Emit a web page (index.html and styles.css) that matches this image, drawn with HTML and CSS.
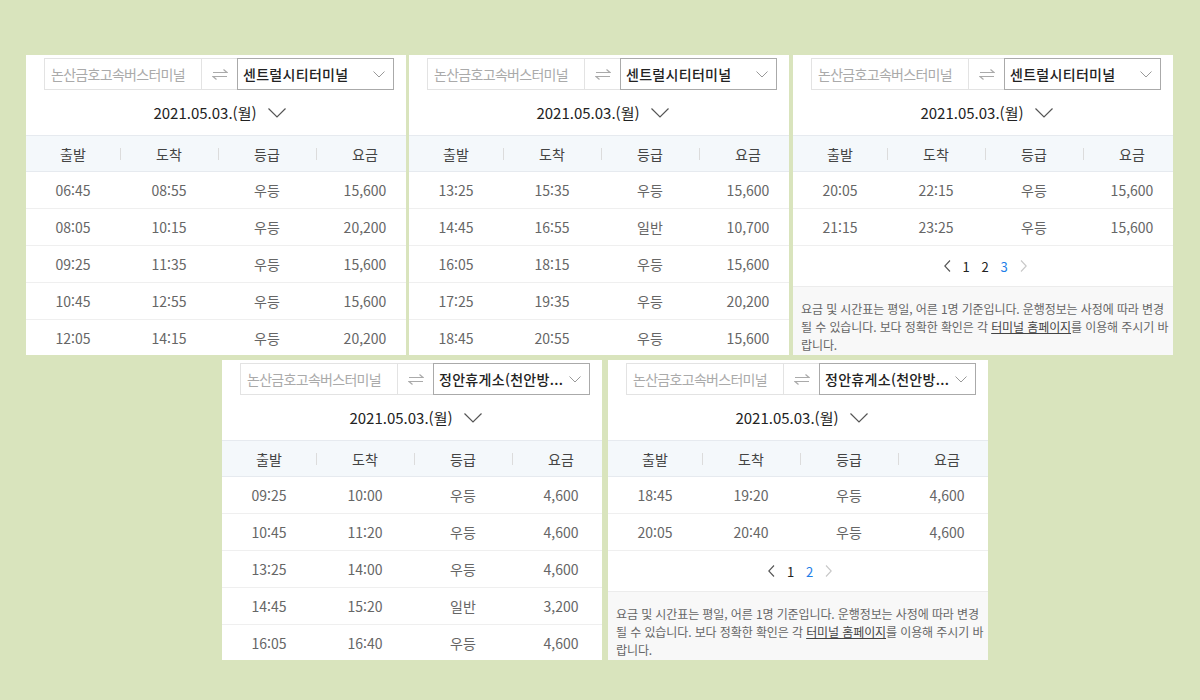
FILE: index.html
```html
<!DOCTYPE html>
<html lang="ko">
<head>
<meta charset="utf-8">
<title>시간표</title>
<link rel="stylesheet" href="styles.css">
</head>
<body>
<div class="board">
  <div class="row row-top">
    <section class="panel">
      <div class="route">
        <div class="from">논산금호고속버스터미널</div>
        <div class="swap"><svg width="16" height="12" viewBox="0 0 16 12"><path d="M1 4.5H15L11.5 1.5M15 8.5H1L4.5 11.5" fill="none" stroke="#aaa" stroke-width="1.2"/></svg></div>
        <div class="to"><span class="to-name">센트럴시티터미널</span><svg class="chev" width="12" height="7" viewBox="0 0 12 7"><polyline points="0.5,0.5 6,6 11.5,0.5" fill="none" stroke="#999" stroke-width="1"/></svg></div>
      </div>
      <div class="date">2021.05.03.(월)<svg class="date-chev" width="18" height="10" viewBox="0 0 18 10"><polyline points="0.5,0.5 9,9 17.5,0.5" fill="none" stroke="#555" stroke-width="1.2"/></svg></div>
      <div class="thead"><span>출발</span><span>도착</span><span>등급</span><span>요금</span></div>
      <div class="tr"><span>06:45</span><span>08:55</span><span>우등</span><span>15,600</span></div>
      <div class="tr"><span>08:05</span><span>10:15</span><span>우등</span><span>20,200</span></div>
      <div class="tr"><span>09:25</span><span>11:35</span><span>우등</span><span>15,600</span></div>
      <div class="tr"><span>10:45</span><span>12:55</span><span>우등</span><span>15,600</span></div>
      <div class="tr"><span>12:05</span><span>14:15</span><span>우등</span><span>20,200</span></div>
    </section>
    <section class="panel">
      <div class="route">
        <div class="from">논산금호고속버스터미널</div>
        <div class="swap"><svg width="16" height="12" viewBox="0 0 16 12"><path d="M1 4.5H15L11.5 1.5M15 8.5H1L4.5 11.5" fill="none" stroke="#aaa" stroke-width="1.2"/></svg></div>
        <div class="to"><span class="to-name">센트럴시티터미널</span><svg class="chev" width="12" height="7" viewBox="0 0 12 7"><polyline points="0.5,0.5 6,6 11.5,0.5" fill="none" stroke="#999" stroke-width="1"/></svg></div>
      </div>
      <div class="date">2021.05.03.(월)<svg class="date-chev" width="18" height="10" viewBox="0 0 18 10"><polyline points="0.5,0.5 9,9 17.5,0.5" fill="none" stroke="#555" stroke-width="1.2"/></svg></div>
      <div class="thead"><span>출발</span><span>도착</span><span>등급</span><span>요금</span></div>
      <div class="tr"><span>13:25</span><span>15:35</span><span>우등</span><span>15,600</span></div>
      <div class="tr"><span>14:45</span><span>16:55</span><span>일반</span><span>10,700</span></div>
      <div class="tr"><span>16:05</span><span>18:15</span><span>우등</span><span>15,600</span></div>
      <div class="tr"><span>17:25</span><span>19:35</span><span>우등</span><span>20,200</span></div>
      <div class="tr"><span>18:45</span><span>20:55</span><span>우등</span><span>15,600</span></div>
    </section>
    <section class="panel panel-last">
      <div class="route">
        <div class="from">논산금호고속버스터미널</div>
        <div class="swap"><svg width="16" height="12" viewBox="0 0 16 12"><path d="M1 4.5H15L11.5 1.5M15 8.5H1L4.5 11.5" fill="none" stroke="#aaa" stroke-width="1.2"/></svg></div>
        <div class="to"><span class="to-name">센트럴시티터미널</span><svg class="chev" width="12" height="7" viewBox="0 0 12 7"><polyline points="0.5,0.5 6,6 11.5,0.5" fill="none" stroke="#999" stroke-width="1"/></svg></div>
      </div>
      <div class="date">2021.05.03.(월)<svg class="date-chev" width="18" height="10" viewBox="0 0 18 10"><polyline points="0.5,0.5 9,9 17.5,0.5" fill="none" stroke="#555" stroke-width="1.2"/></svg></div>
      <div class="thead"><span>출발</span><span>도착</span><span>등급</span><span>요금</span></div>
      <div class="tr"><span>20:05</span><span>22:15</span><span>우등</span><span>15,600</span></div>
      <div class="tr"><span>21:15</span><span>23:25</span><span>우등</span><span>15,600</span></div>
      <div class="pager">
        <span class="pg"><svg width="7" height="12" viewBox="0 0 7 12"><polyline points="6,0.5 0.8,6 6,11.5" fill="none" stroke="#555" stroke-width="1.1"/></svg></span>
        <span class="pg">1</span><span class="pg">2</span><span class="pg cur">3</span>
        <span class="pg"><svg width="7" height="12" viewBox="0 0 7 12"><polyline points="1,0.5 6.2,6 1,11.5" fill="none" stroke="#c8c8c8" stroke-width="1.1"/></svg></span>
      </div>
      <p class="note">요금 및 시간표는 평일, 어른 1명 기준입니다. 운행정보는 사정에 따라 변경<br>될 수 있습니다. 보다 정확한 확인은 각 <a class="link">터미널 홈페이지</a>를 이용해 주시기 바<br>랍니다.</p>
    </section>
  </div>
  <div class="row row-bottom">
    <section class="panel">
      <div class="route">
        <div class="from">논산금호고속버스터미널</div>
        <div class="swap"><svg width="16" height="12" viewBox="0 0 16 12"><path d="M1 4.5H15L11.5 1.5M15 8.5H1L4.5 11.5" fill="none" stroke="#aaa" stroke-width="1.2"/></svg></div>
        <div class="to"><span class="to-name">정안휴게소(천안방...</span><svg class="chev" width="12" height="7" viewBox="0 0 12 7"><polyline points="0.5,0.5 6,6 11.5,0.5" fill="none" stroke="#999" stroke-width="1"/></svg></div>
      </div>
      <div class="date">2021.05.03.(월)<svg class="date-chev" width="18" height="10" viewBox="0 0 18 10"><polyline points="0.5,0.5 9,9 17.5,0.5" fill="none" stroke="#555" stroke-width="1.2"/></svg></div>
      <div class="thead"><span>출발</span><span>도착</span><span>등급</span><span>요금</span></div>
      <div class="tr"><span>09:25</span><span>10:00</span><span>우등</span><span>4,600</span></div>
      <div class="tr"><span>10:45</span><span>11:20</span><span>우등</span><span>4,600</span></div>
      <div class="tr"><span>13:25</span><span>14:00</span><span>우등</span><span>4,600</span></div>
      <div class="tr"><span>14:45</span><span>15:20</span><span>일반</span><span>3,200</span></div>
      <div class="tr"><span>16:05</span><span>16:40</span><span>우등</span><span>4,600</span></div>
    </section>
    <section class="panel">
      <div class="route">
        <div class="from">논산금호고속버스터미널</div>
        <div class="swap"><svg width="16" height="12" viewBox="0 0 16 12"><path d="M1 4.5H15L11.5 1.5M15 8.5H1L4.5 11.5" fill="none" stroke="#aaa" stroke-width="1.2"/></svg></div>
        <div class="to"><span class="to-name">정안휴게소(천안방...</span><svg class="chev" width="12" height="7" viewBox="0 0 12 7"><polyline points="0.5,0.5 6,6 11.5,0.5" fill="none" stroke="#999" stroke-width="1"/></svg></div>
      </div>
      <div class="date">2021.05.03.(월)<svg class="date-chev" width="18" height="10" viewBox="0 0 18 10"><polyline points="0.5,0.5 9,9 17.5,0.5" fill="none" stroke="#555" stroke-width="1.2"/></svg></div>
      <div class="thead"><span>출발</span><span>도착</span><span>등급</span><span>요금</span></div>
      <div class="tr"><span>18:45</span><span>19:20</span><span>우등</span><span>4,600</span></div>
      <div class="tr"><span>20:05</span><span>20:40</span><span>우등</span><span>4,600</span></div>
      <div class="pager">
        <span class="pg"><svg width="7" height="12" viewBox="0 0 7 12"><polyline points="6,0.5 0.8,6 6,11.5" fill="none" stroke="#555" stroke-width="1.1"/></svg></span>
        <span class="pg">1</span><span class="pg cur">2</span>
        <span class="pg"><svg width="7" height="12" viewBox="0 0 7 12"><polyline points="1,0.5 6.2,6 1,11.5" fill="none" stroke="#c8c8c8" stroke-width="1.1"/></svg></span>
      </div>
      <p class="note">요금 및 시간표는 평일, 어른 1명 기준입니다. 운행정보는 사정에 따라 변경<br>될 수 있습니다. 보다 정확한 확인은 각 <a class="link">터미널 홈페이지</a>를 이용해 주시기 바<br>랍니다.</p>
    </section>
  </div>
</div>
</body>
</html>
```

FILE: styles.css
```css
* { box-sizing: border-box; }

html, body {
  margin: 0;
  padding: 0;
}

body {
  width: 1200px;
  height: 700px;
  background: #d9e4bd;
  font-family: "Noto Sans CJK KR", "Noto Sans", sans-serif;
  overflow: hidden;
}

.board {
  padding-top: 55px;
  display: flex;
  flex-direction: column;
  gap: 5px;
}

.row {
  display: flex;
}

.row-top {
  padding-left: 26px;
  gap: 3px;
}

.row-top .panel-last {
  margin-left: 1px;
}

.row-bottom {
  padding-left: 222px;
  gap: 6px;
}

.panel {
  width: 380px;
  height: 300px;
  background: #fff;
  overflow: hidden;
  padding-top: 3px;
}

/* route selector */
.route {
  display: flex;
  width: 350px;
  height: 32px;
  margin-left: 18px;
  border: 1px solid #e3e3e3;
}

.from {
  width: 157px;
  border-right: 1px solid #e3e3e3;
  padding-left: 6px;
  display: flex;
  align-items: center;
  font-size: 14px;
  letter-spacing: -0.7px;
  color: #aaa;
  white-space: nowrap;
}

.swap {
  width: 35px;
  display: flex;
  align-items: center;
  justify-content: center;
}

.to {
  flex: 1;
  margin: -1px -1px -1px 0;
  border: 1px solid #aaa;
  display: flex;
  align-items: center;
  justify-content: space-between;
  padding: 0 8px 0 5px;
  color: #222;
}

.to-name {
  font-size: 14px;
  font-weight: 500;
  letter-spacing: 0.3px;
  white-space: nowrap;
}

.chev { flex: none; }

/* date */
.date {
  height: 45px;
  display: flex;
  align-items: center;
  justify-content: center;
  font-size: 15px;
  color: #222;
  gap: 11px;
  padding-left: 7px;
}

/* table */
.thead, .tr {
  display: grid;
  grid-template-columns: 94px 98px 98px 98px;
  width: 388px;
  font-size: 14px;
}

.thead {
  height: 37px;
  background: #f4f8fb;
  border-top: 1px solid #e6eaef;
  border-bottom: 1px solid #e6eaef;
  color: #444;
}

.thead span, .tr span {
  display: flex;
  align-items: center;
  justify-content: center;
}

.thead span + span {
  background: linear-gradient(#dcdcdc, #dcdcdc) left center / 1px 12px no-repeat;
}

.tr {
  height: 37px;
  border-bottom: 1px solid #efefef;
  color: #666;
}

/* pager */
.pager {
  height: 40px;
  display: flex;
  align-items: center;
  justify-content: center;
  padding-left: 4px;
  font-size: 13px;
  color: #222;
}

.pg {
  width: 19px;
  display: flex;
  align-items: center;
  justify-content: center;
}

.pg.cur { color: #1e7ee8; }

/* note */
.note {
  margin: 0;
  background: #f8f8f8;
  border-top: 1px solid #ececec;
  padding: 13px 8px;
  font-size: 12px;
  line-height: 18px;
  letter-spacing: -0.1px;
  color: #666;
  white-space: nowrap;
  height: 100px;
}

.link {
  color: #444;
  text-decoration: underline;
}
```
